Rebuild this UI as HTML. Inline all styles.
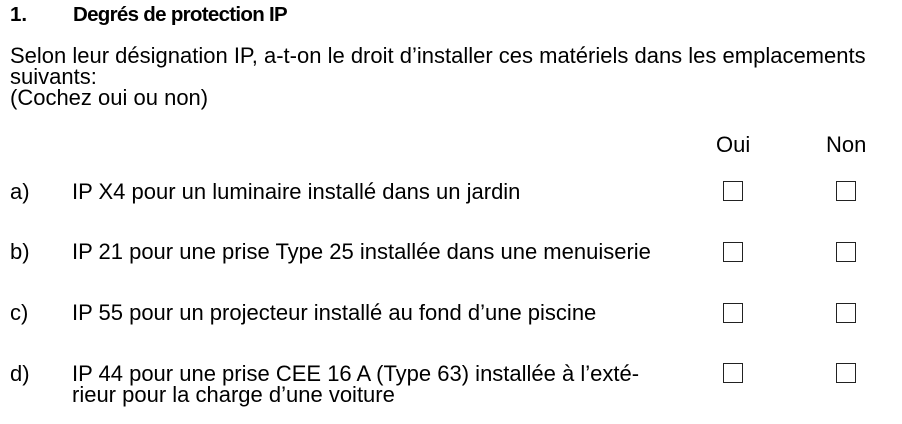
<!DOCTYPE html>
<html><head><style>
body{margin:0;width:902px;height:424px;background:#fff;font-family:"Liberation Sans",Arial,sans-serif;color:#000;font-size:22px;position:relative;overflow:hidden}
.t{position:absolute;white-space:nowrap;line-height:21px}
.b{position:absolute;width:20px;height:20px;border:1.5px solid #222;box-sizing:border-box}
</style></head><body>
<div class="t" style="left:10px;top:4px;font-weight:bold;font-size:20.5px">1.</div>
<div class="t" style="left:73px;top:4px;font-weight:bold;font-size:20.5px;letter-spacing:-0.7px">Degrés de protection IP</div>
<div class="t" style="left:10px;top:45px">Selon leur désignation IP, a-t-on le droit d’installer ces matériels dans les emplacements</div>
<div class="t" style="left:10px;top:66px">suivants:</div>
<div class="t" style="left:10px;top:87px">(Cochez oui ou non)</div>
<div class="t" style="left:716px;top:134px">Oui</div>
<div class="t" style="left:826px;top:134px">Non</div>

<div class="t" style="left:10px;top:181px">a)</div>
<div class="t" style="left:72px;top:181px">IP X4 pour un luminaire installé dans un jardin</div>
<div class="b" style="left:723px;top:181px"></div><div class="b" style="left:836px;top:181px"></div>

<div class="t" style="left:10px;top:241px">b)</div>
<div class="t" style="left:72px;top:241px">IP 21 pour une prise Type 25 installée dans une menuiserie</div>
<div class="b" style="left:723px;top:242px"></div><div class="b" style="left:836px;top:242px"></div>

<div class="t" style="left:10px;top:302px">c)</div>
<div class="t" style="left:72px;top:302px">IP 55 pour un projecteur installé au fond d’une piscine</div>
<div class="b" style="left:723px;top:303px"></div><div class="b" style="left:836px;top:303px"></div>

<div class="t" style="left:10px;top:363px">d)</div>
<div class="t" style="left:72px;top:363px">IP 44 pour une prise CEE 16 A (Type 63) installée à l’exté-</div>
<div class="t" style="left:72px;top:384px">rieur pour la charge d’une voiture</div>
<div class="b" style="left:723px;top:363px"></div><div class="b" style="left:836px;top:363px"></div>
</body></html>
